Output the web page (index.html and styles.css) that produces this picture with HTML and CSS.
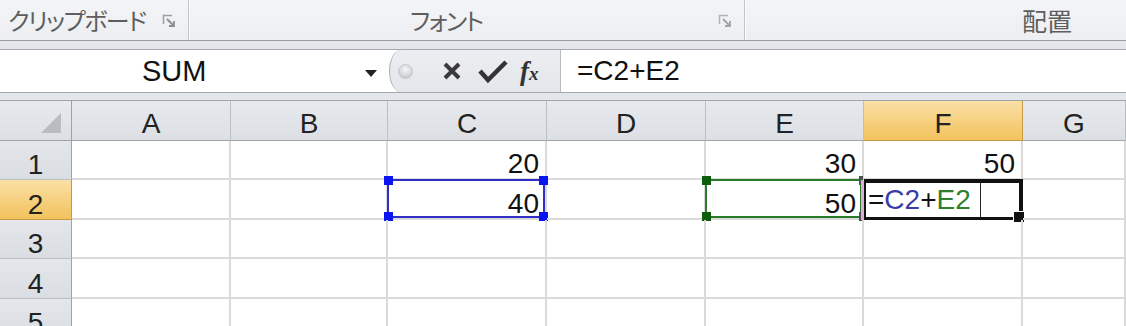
FILE: index.html
```html
<!DOCTYPE html>
<html>
<head>
    <title>SUM</title>
    <link rel="stylesheet" href="styles.css">
</head>
<body>
    <div class="ribbon">
        <div class="group group-clip">
            <span class="group-label">クリップボード</span>
            <svg class="launcher" width="14" height="14" viewBox="0 0 14 14">
                <path d="M1.5 10 V1.5 H10" fill="none" stroke="#9a9ea4" stroke-width="1.5"/>
                <path d="M5 5 L12 12 M12 7 V12 H7" fill="none" stroke="#8a8e94" stroke-width="1.8"/>
            </svg>
        </div>
        <div class="group group-font">
            <span class="group-label">フォント</span>
            <svg class="launcher" width="14" height="14" viewBox="0 0 14 14">
                <path d="M1.5 10 V1.5 H10" fill="none" stroke="#b0b4b9" stroke-width="1.5"/>
                <path d="M5 5 L12 12 M12 7 V12 H7" fill="none" stroke="#a0a4aa" stroke-width="1.8"/>
            </svg>
        </div>
        <div class="group group-align">
            <span class="group-label label-kanji">配置</span>
        </div>
    </div>

    <div class="formula-bar">
        <div class="name-box">
            <span class="name">SUM</span>
            <svg class="drop" width="12" height="7" viewBox="0 0 12 7">
                <polygon points="0,0 12,0 6,7" fill="#222"/>
            </svg>
        </div>
        <div class="fx-buttons">
            <span class="grip"></span>
            <svg class="btn-cancel" width="20" height="18" viewBox="0 0 20 18">
                <path d="M3 2 L17 16 M17 2 L3 16" stroke="#3a3a3a" stroke-width="4"/>
            </svg>
            <svg class="btn-enter" width="30" height="25" viewBox="0 0 30 25">
                <path d="M2 12 L10 21 L28 3" fill="none" stroke="#333" stroke-width="4.5"/>
            </svg>
            <span class="btn-fx">f<span class="fx-x">x</span></span>
        </div>
        <div class="formula-input">=C2+E2</div>
    </div>

    <div class="sheet">
        <div class="corner">
            <svg width="20" height="20" viewBox="0 0 20 20">
                <polygon points="20,0 20,20 0,20" fill="#b9bdc2"/>
            </svg>
        </div>
        <div class="col-head">A</div>
        <div class="col-head">B</div>
        <div class="col-head">C</div>
        <div class="col-head">D</div>
        <div class="col-head">E</div>
        <div class="col-head selected">F</div>
        <div class="col-head">G</div>

        <div class="row-head">1</div>
        <div class="cell"></div>
        <div class="cell"></div>
        <div class="cell">20</div>
        <div class="cell"></div>
        <div class="cell">30</div>
        <div class="cell">50</div>
        <div class="cell"></div>

        <div class="row-head selected">2</div>
        <div class="cell"></div>
        <div class="cell"></div>
        <div class="cell">40
            <div class="range range-blue">
                <span class="handle tl"></span><span class="handle tr"></span>
                <span class="handle bl"></span><span class="handle br"></span>
            </div>
        </div>
        <div class="cell"></div>
        <div class="cell">50
            <div class="range range-green">
                <span class="handle tl"></span><span class="handle tr"></span>
                <span class="handle bl"></span><span class="handle br"></span>
            </div>
        </div>
        <div class="cell cell-edit">
            <span class="edit">=<span class="ref-blue">C2</span>+<span class="ref-green">E2</span></span>
            <div class="active"></div>
        </div>
        <div class="cell"></div>

        <div class="row-head">3</div>
        <div class="cell"></div><div class="cell"></div><div class="cell"></div><div class="cell"></div>
        <div class="cell"></div><div class="cell"></div><div class="cell"></div>

        <div class="row-head">4</div>
        <div class="cell"></div><div class="cell"></div><div class="cell"></div><div class="cell"></div>
        <div class="cell"></div><div class="cell"></div><div class="cell"></div>

        <div class="row-head">5</div>
        <div class="cell"></div><div class="cell"></div><div class="cell"></div><div class="cell"></div>
        <div class="cell"></div><div class="cell"></div><div class="cell"></div>
    </div>
</body>
</html>
```

FILE: styles.css
```css
* {
    box-sizing: border-box;
}
body {
    margin: 0;
    background: #e3e6ea;
    font-family: "Liberation Sans", Arial, sans-serif;
    overflow: hidden;
}

/* Ribbon group captions */
.ribbon {
    display: flex;
    height: 41px;
    background: linear-gradient(#f4f5f7, #eceef1);
    border-bottom: 1px solid #989da4;
}
.group {
    display: flex;
    align-items: center;
    border-right: 1px solid #c1c4c8;
    box-shadow: 1px 0 0 #fbfcfd;
}
.group-clip {
    width: 189px;
    padding-left: 8px;
}
.group-font {
    width: 556px;
    padding-left: 221px;
}
.group-align {
    flex: 1;
    padding-left: 277px;
    border-right: none;
}
.group-label {
    font-family: "Noto Sans CJK JP", sans-serif;
    font-feature-settings: "palt";
    font-size: 24px;
    letter-spacing: -1.5px;
    line-height: 1;
    color: #5e5e5e;
}
.label-kanji {
    font-size: 25px;
    letter-spacing: 0;
}
.group-clip .launcher,
.group-font .launcher {
    margin-left: auto;
    margin-right: 12px;
    margin-top: 1px;
}

/* Formula bar */
.formula-bar {
    display: flex;
    height: 44px;
    margin-top: 8px;
    background: #fff;
    border-top: 1px solid #a3a8ae;
    border-bottom: 1px solid #a3a8ae;
}
.name-box {
    width: 389px;
    display: flex;
    align-items: center;
}
.name {
    margin-left: 142px;
    font-size: 29px;
    color: #111;
}
.drop {
    margin-left: auto;
    margin-right: 12px;
    margin-top: 4px;
}
.fx-buttons {
    width: 171px;
    display: flex;
    align-items: center;
    background: linear-gradient(#eceef1, #e3e6ea);
    border-left: 1px solid #a6aaaf;
    border-radius: 12px 0 0 12px / 21px 0 0 21px;
}
.grip {
    width: 15px;
    height: 15px;
    margin-left: 8px;
    border-radius: 50%;
    background: radial-gradient(circle at 50% 35%, #f6f6f6, #bdbfc2);
    border: 1px solid #c4c6c9;
}
.btn-cancel {
    margin-left: 29px;
}
.btn-enter {
    margin-left: 16px;
}
.btn-fx {
    margin-left: 12px;
    font-family: "Liberation Serif", serif;
    font-style: italic;
    font-weight: bold;
    font-size: 27px;
    color: #333;
}
.fx-x {
    font-size: 19px;
}
.formula-input {
    flex: 1;
    display: flex;
    align-items: center;
    padding-left: 16px;
    border-left: 1px solid #b9bdc2;
    font-size: 28px;
    color: #111;
}

/* Sheet grid */
.sheet {
    margin-top: 7px;
    display: grid;
    grid-template-columns: 72px 159px 157px 159px 159px 158px 159px 1fr;
    grid-template-rows: 40px 39px 40px 39px 40px 39px;
    background: #fff;
    border-top: 1px solid #9ea3a9;
    font-size: 28px;
    line-height: 1;
}
.corner {
    display: flex;
    align-items: flex-end;
    justify-content: flex-end;
    padding: 0 10px 7px 0;
    background: linear-gradient(#e6e9ed, #dcdfe3);
    border-right: 1px solid #9ea3a9;
    border-bottom: 1px solid #9ea3a9;
}
.col-head {
    display: flex;
    align-items: flex-end;
    justify-content: center;
    padding-bottom: 2px;
    background: linear-gradient(#e6e9ed, #dcdfe3);
    border-right: 1px solid #bcc0c5;
    border-bottom: 1px solid #9ea3a9;
    color: #222;
}
.row-head {
    display: flex;
    align-items: flex-end;
    justify-content: center;
    background: linear-gradient(#e3e6ea, #dadde1);
    border-right: 1px solid #9ea3a9;
    border-bottom: 1px solid #bcc0c5;
    color: #222;
}
.col-head.selected,
.row-head.selected {
    background: linear-gradient(#fae0a6, #f2c25c);
    border-color: #c59a44;
}
.cell {
    position: relative;
    display: flex;
    align-items: flex-end;
    justify-content: flex-end;
    padding-right: 6px;
    border-right: 2px solid #dadada;
    border-bottom: 2px solid #dadada;
    color: #111;
}

/* Reference ranges and active cell */
.range {
    position: absolute;
    top: -1px;
    left: -1px;
    right: 0;
    bottom: 0;
    border: 2px solid;
}
.range-blue {
    border-color: #2f2fc6;
}
.range-green {
    border-color: #2a7a2a;
}
.handle {
    position: absolute;
    width: 9px;
    height: 9px;
}
.range-blue .handle {
    background: #0a14f0;
}
.range-green .handle {
    background: #0c5e0c;
}
.handle.tl { top: -5px; left: -5px; }
.handle.tr { top: -5px; right: -5px; }
.handle.bl { bottom: -5px; left: -5px; }
.handle.br { bottom: -5px; right: -5px; }
.range-green .handle.tr,
.range-green .handle.br {
    width: 4px;
    right: -3px;
    background: #4d5350;
}

.cell-edit {
    justify-content: flex-start;
    align-items: stretch;
    padding: 0 0 0 2px;
    box-shadow: -3px 0 0 #dcaedc;
}
.edit {
    display: flex;
    align-items: flex-end;
    padding: 0 9px 4px 2px;
    border-right: 1px solid #222;
    color: #111;
}
.ref-blue {
    color: #3b3ba8;
}
.ref-green {
    color: #2e7f2e;
}
.active {
    position: absolute;
    top: -1px;
    left: 0;
    right: -2px;
    bottom: -2px;
    border: 4px solid #111;
    border-left-width: 2px;
    border-bottom-width: 3px;
}
.active::after {
    content: "";
    position: absolute;
    right: -6px;
    bottom: -6px;
    width: 10px;
    height: 10px;
    background: #111;
    border: 1px solid #fff;
}
```
